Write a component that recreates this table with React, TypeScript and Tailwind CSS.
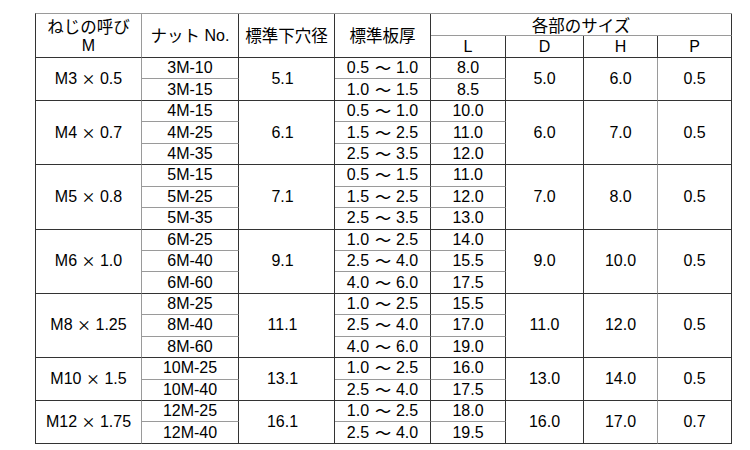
import React from "react";

type Group = {
  m: string;
  hole: string;
  d: string;
  h: string;
  p: string;
  rows: [string, string, string][];
};

const groups: Group[] = [
  { m: "M3 × 0.5", hole: "5.1", d: "5.0", h: "6.0", p: "0.5", rows: [["3M-10", "0.5 ～ 1.0", "8.0"], ["3M-15", "1.0 ～ 1.5", "8.5"]] },
  { m: "M4 × 0.7", hole: "6.1", d: "6.0", h: "7.0", p: "0.5", rows: [["4M-15", "0.5 ～ 1.0", "10.0"], ["4M-25", "1.5 ～ 2.5", "11.0"], ["4M-35", "2.5 ～ 3.5", "12.0"]] },
  { m: "M5 × 0.8", hole: "7.1", d: "7.0", h: "8.0", p: "0.5", rows: [["5M-15", "0.5 ～ 1.5", "11.0"], ["5M-25", "1.5 ～ 2.5", "12.0"], ["5M-35", "2.5 ～ 3.5", "13.0"]] },
  { m: "M6 × 1.0", hole: "9.1", d: "9.0", h: "10.0", p: "0.5", rows: [["6M-25", "1.0 ～ 2.5", "14.0"], ["6M-40", "2.5 ～ 4.0", "15.5"], ["6M-60", "4.0 ～ 6.0", "17.5"]] },
  { m: "M8 × 1.25", hole: "11.1", d: "11.0", h: "12.0", p: "0.5", rows: [["8M-25", "1.0 ～ 2.5", "15.5"], ["8M-40", "2.5 ～ 4.0", "17.0"], ["8M-60", "4.0 ～ 6.0", "19.0"]] },
  { m: "M10 × 1.5", hole: "13.1", d: "13.0", h: "14.0", p: "0.5", rows: [["10M-25", "1.0 ～ 2.5", "16.0"], ["10M-40", "2.5 ～ 4.0", "17.5"]] },
  { m: "M12 × 1.75", hole: "16.1", d: "16.0", h: "17.0", p: "0.7", rows: [["12M-25", "1.0 ～ 2.5", "18.0"], ["12M-40", "2.5 ～ 4.0", "19.5"]] },
];

const JP = "font-['Noto_Sans_CJK_JP',sans-serif] text-[16.5px]";
const base = "flex items-center justify-center border-r border-b text-black leading-none";

const spanClass: Record<number, string> = {
  2: "row-span-2",
  3: "row-span-3",
};

function Tilde({ text }: { text: string }) {
  const [a, b] = text.split(" ～ ");
  return (
    <span className="whitespace-pre">
      {a}{" "}
      <span className="mx-[2px] inline-block scale-x-[1.15] font-['Noto_Sans_CJK_JP',sans-serif] text-[14px] font-medium">～</span>
      {" "}{b}
    </span>
  );
}

function Size({ text }: { text: string }) {
  const [a, b] = text.split(" × ");
  return (
    <span className="whitespace-pre">
      {a}{" "}
      <span className="font-['Noto_Sans_CJK_JP',sans-serif] text-[14px] font-medium">×</span>
      {" "}{b}
    </span>
  );
}

export default function App() {
  return (
    <div className="w-[750px] h-[450px] bg-white pl-[35px] pt-[13px] font-['Liberation_Sans','Noto_Sans_CJK_JP',sans-serif] text-[16px]">
      <div className="grid w-fit grid-cols-[106px_97px_96px_96px_75px_78px_74px_74px] grid-rows-[22px_22px_repeat(18,21.44px)] border-t border-l border-t-[#9a9a9a] border-l-[#333]">
        {/* header */}
        <div className={`${base} row-span-2 flex-col border-r-[#9a9a9a] border-b-[#333]`}>
          <span className={`${JP} leading-[20px]`}>ねじの呼び</span>
          <span className="leading-[20px]">M</span>
        </div>
        <div className={`${base} row-span-2 border-r-[#333] border-b-[#333]`}>
          <span className={JP}>ナット</span>
          <span className="whitespace-pre"> No.</span>
        </div>
        <div className={`${base} row-span-2 border-r-[#333] border-b-[#333]`}>
          <span className={JP}>標準下穴径</span>
        </div>
        <div className={`${base} row-span-2 border-r-[#333] border-b-[#333]`}>
          <span className={JP}>標準板厚</span>
        </div>
        <div className={`${base} col-span-4 border-r-[#333] border-b-[#9a9a9a]`}>
          <span className={`${JP} pt-[2px]`}>各部のサイズ</span>
        </div>
        <div className={`${base} border-r-[#333] border-b-[#333]`}>L</div>
        <div className={`${base} border-r-[#333] border-b-[#333]`}>D</div>
        <div className={`${base} border-r-[#333] border-b-[#333]`}>H</div>
        <div className={`${base} border-r-[#333] border-b-[#333]`}>P</div>

        {groups.map((g) => {
          const n = g.rows.length;
          const span = spanClass[n];
          return (
            <React.Fragment key={g.m}>
              {g.rows.map((r, i) => {
                const last = i === n - 1;
                const rowB = last ? "border-b-[#333]" : "border-b-[#9a9a9a]";
                return (
                  <React.Fragment key={r[0]}>
                    {i === 0 && (
                      <div className={`${base} ${span} border-r-[#9a9a9a] border-b-[#333]`}>
                        <Size text={g.m} />
                      </div>
                    )}
                    <div className={`${base} border-r-[#333] ${rowB}`}>{r[0]}</div>
                    {i === 0 && (
                      <div className={`${base} ${span} border-r-[#333] border-b-[#333] pr-[8px]`}>{g.hole}</div>
                    )}
                    <div className={`${base} border-r-[#333] ${rowB}`}>
                      <Tilde text={r[1]} />
                    </div>
                    <div className={`${base} border-r-[#333] ${rowB}`}>{r[2]}</div>
                    {i === 0 && (
                      <>
                        <div className={`${base} ${span} border-r-[#333] border-b-[#333]`}>{g.d}</div>
                        <div className={`${base} ${span} border-r-[#9a9a9a] border-b-[#333]`}>{g.h}</div>
                        <div className={`${base} ${span} border-r-[#333] border-b-[#333]`}>{g.p}</div>
                      </>
                    )}
                  </React.Fragment>
                );
              })}
            </React.Fragment>
          );
        })}
      </div>
    </div>
  );
}
